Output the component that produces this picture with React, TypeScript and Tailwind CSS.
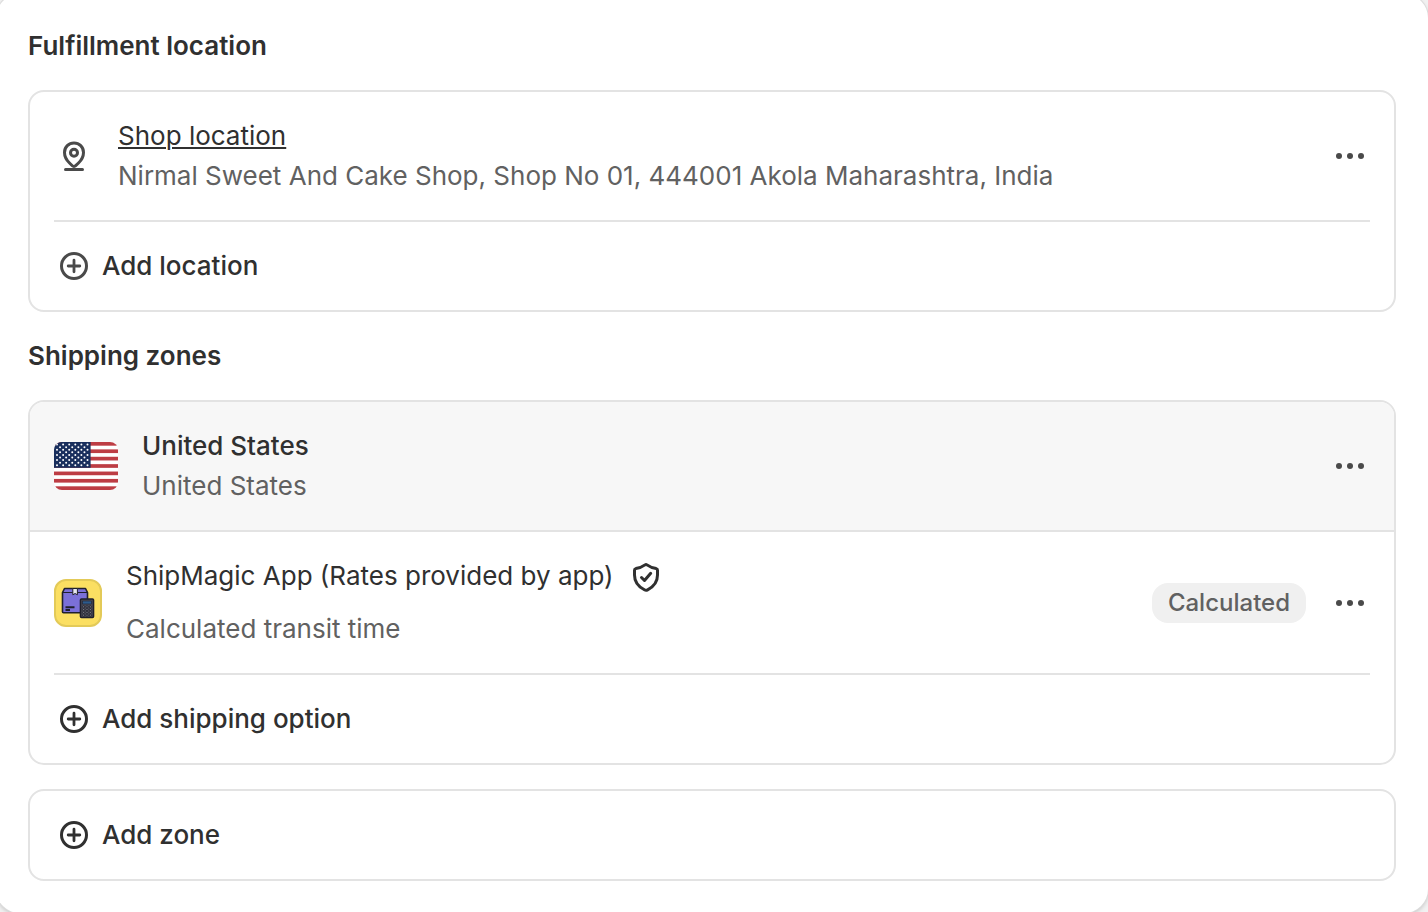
import React from "react";

const PlusCircleIcon = () => (
  <svg
    viewBox="0 0 20 20"
    className="size-10 shrink-0"
    fill="none"
    stroke="currentColor"
    strokeLinecap="round"
    aria-hidden="true"
  >
    <circle cx="10" cy="10" r="6.25" strokeWidth="1.5" />
    <path d="M10 7.1v5.8M7.1 10h5.8" strokeWidth="1.4" />
  </svg>
);

const PinIcon = () => (
  <svg
    viewBox="0 0 20 20"
    className="size-10 shrink-0 text-[#4a4a4a]"
    fill="none"
    stroke="currentColor"
    strokeWidth="1.5"
    strokeLinecap="round"
    strokeLinejoin="round"
    aria-hidden="true"
  >
    <path d="M5.25 8.2a4.75 4.75 0 0 1 9.5 0c0 2.3-1.1 3.9-2.5 5.3l-1.4 1.35a1.2 1.2 0 0 1-1.7 0L7.75 13.5c-1.4-1.4-2.5-3-2.5-5.3Z" />
    <circle cx="10" cy="8.4" r="1.75" />
    <path d="M5.75 16.75h8.5" />
  </svg>
);

const ShieldIcon = () => (
  <svg
    viewBox="0 0 20 20"
    className="size-10 shrink-0"
    fill="none"
    stroke="currentColor"
    strokeWidth="1.5"
    strokeLinecap="round"
    strokeLinejoin="round"
    aria-hidden="true"
  >
    <path d="M9.5 4.45a.9.9 0 0 1 1 0c1.3.95 2.8 1.55 4.6 1.85.4.1.65.4.65.8v2.4c0 3.2-1.8 5.8-4.95 7.4a1.7 1.7 0 0 1-1.6 0c-3.15-1.6-4.95-4.2-4.95-7.4V7.1c0-.4.25-.7.65-.8 1.8-.3 3.3-.9 4.6-1.85Z" />
    <path d="m7.75 10.75 1.5 1.5 3.1-3.6" />
  </svg>
);

const UsFlag = () => (
  <svg
    viewBox="0 0 64 48"
    className="h-12 w-16 shrink-0 rounded-lg"
    role="img"
    aria-label="US flag"
  >
    <rect width="64" height="48" fill="#fff" />
    {[0, 1, 2, 3, 4, 5, 6].map((i) => (
      <rect key={i} y={(i * 96) / 13} width="64" height={48 / 13} fill="#bd3d44" />
    ))}
    <rect width="36.6" height="25.8" fill="#192f5d" />
    {[0, 1, 2, 3, 4, 5, 6, 7, 8].map((row) =>
      [0, 1, 2, 3, 4, 5].slice(row % 2).map((col) => (
        <circle
          key={`${row}-${col}`}
          cx={3 + col * 6.1 - (row % 2) * 3.05}
          cy={2.6 + row * 2.58}
          r="1"
          fill="#fff"
        />
      ))
    )}
  </svg>
);

const ShipMagicLogo = () => (
  <svg
    viewBox="0 0 48 48"
    className="size-12 shrink-0"
    role="img"
    aria-label="ShipMagic"
  >
    <rect x="1" y="1" width="46" height="46" rx="11" fill="#fbdf62" stroke="#e3ca58" strokeWidth="2" />
    <path
      d="M10.5 9.5h21l2 4v19.3a1 1 0 0 1-1 1h-23a1 1 0 0 1-1-1V13.5Z"
      fill="#7b70d8"
      stroke="#20202c"
      strokeWidth="1.6"
      strokeLinejoin="round"
    />
    <path d="M8.5 13.5h25" stroke="#20202c" strokeWidth="1.2" />
    <path d="M18.8 9.5h4.6v6.3l-2.3-1.3-2.3 1.3Z" fill="#e9e9ee" stroke="#20202c" />
    <path d="M11.5 28.3h9M11.5 31h4.5" stroke="#20202c" strokeWidth="2" />
    <rect x="26.5" y="20" width="13" height="18.5" rx="1" fill="#4b4c57" stroke="#20202c" strokeWidth="1.6" />
    <rect x="28.5" y="22" width="9" height="3" fill="#2d5b8c" stroke="#20202c" strokeWidth=".6" />
    {[0, 1, 2, 3].map((row) =>
      [0, 1, 2].map((col) => (
        <circle
          key={`${row}-${col}`}
          cx={29.6 + col * 3.4}
          cy={27.8 + row * 2.8}
          r="1.1"
          fill="#777984"
          stroke="#20202c"
          strokeWidth=".8"
        />
      ))
    )}
  </svg>
);

const MoreButton = ({ label }: { label: string }) => (
  <button type="button" aria-label={label} className="shrink-0 cursor-pointer text-[#4a4a4a]">
    <svg viewBox="0 0 20 20" className="size-10" fill="currentColor" aria-hidden="true">
      <circle cx="4.5" cy="10" r="1.5" />
      <circle cx="10" cy="10" r="1.5" />
      <circle cx="15.5" cy="10" r="1.5" />
    </svg>
  </button>
);

const AddButton = ({ label, muted }: { label: string; muted?: boolean }) => (
  <button type="button" className="flex cursor-pointer items-center gap-2 py-6 font-medium">
    <span className={muted ? "text-[#4a4a4a]" : "text-[#303030]"}>
      <PlusCircleIcon />
    </span>
    {label}
  </button>
);

const App = () => {
  return (
    <div className="overflow-hidden bg-[#f1f1f1]">
      <main className="-mt-1.5 -mb-px -ml-1 flex flex-col gap-6 rounded-3xl bg-white p-8 font-['Inter',sans-serif] text-[26px] leading-10 text-[#303030] shadow-[0_0_0_1px_#dcdcdc,0_2px_4px_#00000030]">
        <h2 className="font-semibold">Fulfillment location</h2>
        <section className="rounded-2xl border-2 border-[#e3e3e3] px-6">
          <div className="flex items-center gap-6 border-b-2 border-[#e3e3e3] py-6">
            <PinIcon />
            <div className="min-w-0 flex-1">
              <a href="#location" className="block w-fit underline decoration-2 underline-offset-2">
                Shop location
              </a>
              <p className="text-[#616161]">
                Nirmal Sweet And Cake Shop, Shop No 01, 444001 Akola Maharashtra, India
              </p>
            </div>
            <MoreButton label="Location actions" />
          </div>
          <AddButton label="Add location" muted />
        </section>

        <h2 className="font-semibold">Shipping zones</h2>
        <section className="overflow-hidden rounded-2xl border-2 border-[#e3e3e3]">
          <div className="flex items-center gap-6 border-b-2 border-[#e3e3e3] bg-[#f7f7f7] p-6">
            <UsFlag />
            <div className="min-w-0 flex-1">
              <h3 className="font-medium">United States</h3>
              <p className="text-[#616161]">United States</p>
            </div>
            <MoreButton label="Zone actions" />
          </div>
          <div className="px-6">
            <div className="flex items-center gap-6 border-b-2 border-[#e3e3e3] py-6">
              <ShipMagicLogo />
              <div className="flex min-w-0 flex-1 flex-col gap-[13px]">
                <div className="flex items-center gap-3">
                  <p>ShipMagic App (Rates provided by app)</p>
                  <ShieldIcon />
                </div>
                <p className="text-[#616161]">Calculated transit time</p>
              </div>
              <span className="rounded-2xl bg-[#f0f0f0] px-4 text-2xl leading-10 font-medium text-[#616161]">
                Calculated
              </span>
              <MoreButton label="Shipping option actions" />
            </div>
            <AddButton label="Add shipping option" />
          </div>
        </section>

        <section className="rounded-2xl border-2 border-[#e3e3e3] px-6">
          <AddButton label="Add zone" />
        </section>
      </main>
    </div>
  );
};

export default App;
